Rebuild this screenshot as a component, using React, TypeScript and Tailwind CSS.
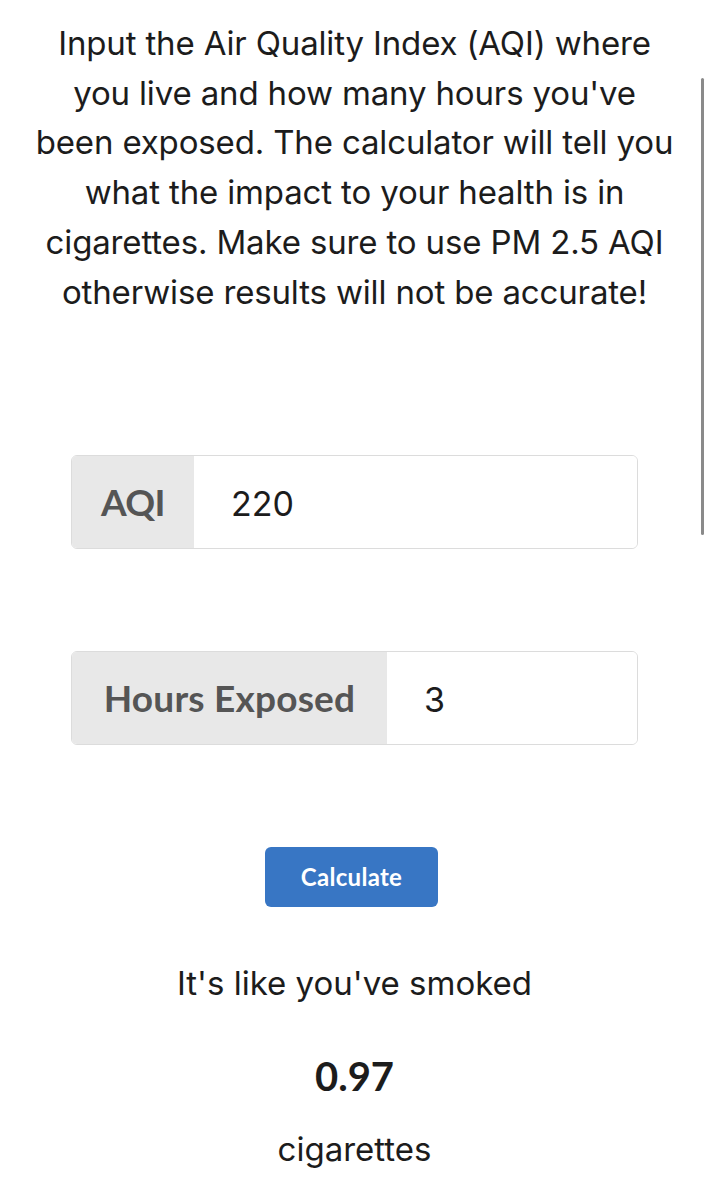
import React from "react";

const sans = { fontFamily: "Inter, 'Noto Sans', sans-serif" };

const intro = [
  "Input the Air Quality Index (AQI) where",
  "you live and how many hours you've",
  "been exposed. The calculator will tell you",
  "what the impact to your health is in",
  "cigarettes. Make sure to use PM 2.5 AQI",
  "otherwise results will not be accurate!",
];

function InputGroup({ label, value, labelWidth }: { label: string; value: string; labelWidth: string }) {
  return (
    <div className="mx-[71px] flex h-[94px] overflow-hidden rounded-[6px] border border-[#dcdcdc]">
      <div
        className={`flex items-center justify-center whitespace-nowrap bg-[#e8e8e8] font-['Lato',sans-serif] text-[37px] font-bold text-[#555555] ${labelWidth}`}
      >
        {label}
      </div>
      <div
        className="flex flex-1 items-center bg-white pl-[37px] pt-[2px] text-[34px] text-[#1c1c1c]"
        style={sans}
      >
        {value}
      </div>
    </div>
  );
}

export default function App() {
  return (
    <div className="relative min-h-[1200px] bg-white text-[#1c1c1c]">
      <p className="pt-[19px] text-center text-[33px] leading-[49.7px] tracking-[-0.15px]" style={sans}>
        {intro.map((line) => (
          <span key={line} className="block whitespace-nowrap">
            {line}
          </span>
        ))}
      </p>

      <div className="mt-[138px]">
        <InputGroup label="AQI" value="220" labelWidth="w-[122px] tracking-[-0.6px]" />
      </div>
      <div className="mt-[102px]">
        <InputGroup label="Hours Exposed" value="3" labelWidth="w-[315px] tracking-[0.2px]" />
      </div>

      <div className="mt-[102px] flex justify-center pr-[6px]">
        <button className="h-[60px] w-[173px] rounded-[6px] bg-[#3876c4] font-['Lato',sans-serif] text-[24px] font-bold tracking-[0.3px] text-white">
          Calculate
        </button>
      </div>

      <p className="mt-[54px] text-center text-[33px] leading-[44px]" style={sans}>
        It's like you've smoked
      </p>
      <p className="mt-[48px] text-center font-['Lato',sans-serif] text-[40px] font-bold leading-[46px]">0.97</p>
      <p className="mt-[28px] text-center text-[33px] leading-[44px]" style={sans}>
        cigarettes
      </p>

      {/* scroll indicator */}
      <div className="absolute left-[701px] top-[78px] h-[457px] w-[3px] rounded-full bg-[#8a8a8a]" />
    </div>
  );
}
